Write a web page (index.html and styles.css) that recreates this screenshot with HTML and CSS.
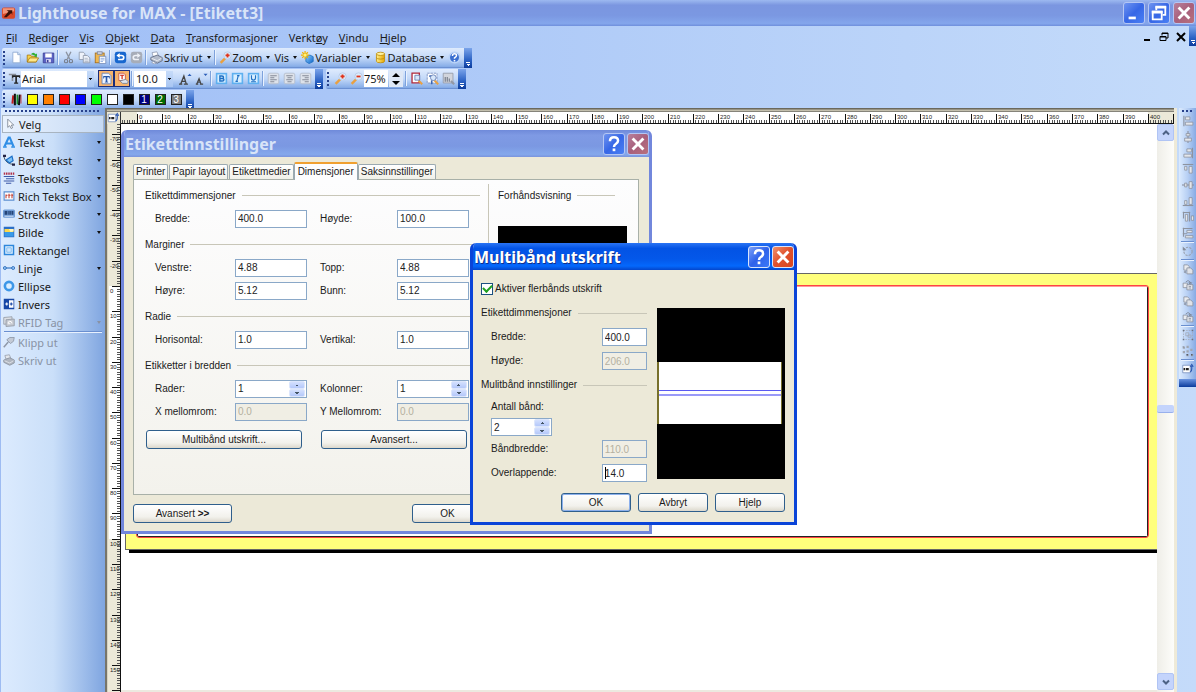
FILE: index.html
```html
<!DOCTYPE html>
<html lang="no">
<head>
<meta charset="utf-8">
<title>Lighthouse for MAX - [Etikett3]</title>
<link rel="stylesheet" href="styles.css">
</head>
<body>
<svg class="defs" aria-hidden="true">
  <defs>
    <linearGradient id="gBlue" x1="0" y1="0" x2="1" y2="1"><stop offset="0" stop-color="#8fd0ff"/><stop offset="1" stop-color="#0a62c8"/></linearGradient>
    <linearGradient id="gGold" x1="0" y1="0" x2="1" y2="0"><stop offset="0" stop-color="#fff08a"/><stop offset="1" stop-color="#e6a400"/></linearGradient>
  </defs>
  <symbol id="i-close" viewBox="0 0 20 20"><path d="M4 4l12 12M16 4L4 16" stroke="#fff" stroke-width="3.200" fill="none"/></symbol>
  <symbol id="i-help" viewBox="0 0 20 20"><path d="M5.500 7q0-4.500 4.500-4.500t4.500 4q0 2-2.500 3.500-2 1.200-2 3.200" stroke="#fff" stroke-width="2.800" fill="none"/><rect x="8.500" y="15" width="3" height="3" fill="#fff"/></symbol>
  <symbol id="i-min" viewBox="0 0 20 20"><rect x="4" y="14" width="8" height="3" fill="#fff"/></symbol>
  <symbol id="i-restore" viewBox="0 0 20 20"><path d="M7 7V3.500h10V12h-3" fill="none" stroke="#fff" stroke-width="2"/><path d="M3 8.500h10V17H3z" fill="none" stroke="#fff" stroke-width="2"/><path d="M2 9h12M6 3.500h12" stroke="#fff" stroke-width="3"/></symbol>
  <symbol id="i-app" viewBox="0 0 16 16"><rect x="1" y="2" width="14" height="12" rx="2" fill="#d8492a"/><path d="M2 3h12v3L2 9z" fill="#f2957a"/><path d="M3 12.500h3L11 8l1 2V5H6l2 1.500z" fill="#3a1008"/></symbol>
  <symbol id="i-new" viewBox="0 0 16 16"><path d="M3.500 1.500h6l3 3v10h-9z" fill="#fff" stroke="#8ba6cf"/><path d="M9.500 1.500v3h3" fill="#cfe0f7" stroke="#8ba6cf"/></symbol>
  <symbol id="i-open" viewBox="0 0 16 16"><path d="M1.500 13.500V5h4l1 1.500h6v7z" fill="#f8d24a" stroke="#a87a10"/><path d="M1.500 13.500l3-5h11l-3 5z" fill="#ffe88a" stroke="#a87a10"/><path d="M6 4q3-4 6 0l1.500-1v4H10l1-1.500" fill="#2fae35"/></symbol>
  <symbol id="i-save" viewBox="0 0 16 16"><path d="M1.500 2.500h13v12h-13z" fill="#5b62c4" stroke="#3b3f94"/><path d="M4 3h8v5H4z" fill="#fff"/><path d="M5 10h6v4H5z" fill="#dcdcf4"/><path d="M6 11h2v3H6z" fill="#3b3f94"/></symbol>
  <symbol id="i-cut" viewBox="0 0 16 16"><path d="M5 1l4.500 9M11 1L6.500 10" stroke="#8c93a0" stroke-width="1.600"/><circle cx="5" cy="12.500" r="2" fill="none" stroke="#777e8c" stroke-width="1.400"/><circle cx="11" cy="12.500" r="2" fill="none" stroke="#777e8c" stroke-width="1.400"/></symbol>
  <symbol id="i-copy" viewBox="0 0 16 16"><path d="M1.500 1.500h5l2 2v7h-7z" fill="#eef2fa" stroke="#8b95a8"/><path d="M6.500 5.500h5l3 3v6h-8z" fill="#eef2fa" stroke="#8b95a8"/><path d="M8 9h4M8 11h5M8 13h5" stroke="#a9b2c2"/></symbol>
  <symbol id="i-paste" viewBox="0 0 16 16"><rect x="1.500" y="2.500" width="11" height="12" fill="#f0b850" stroke="#a36b16"/><rect x="4" y="1" width="6" height="3" fill="#d6dbe6" stroke="#77809a"/><path d="M6.500 6.500h8v9h-8z" fill="#fff" stroke="#6f88b8"/><path d="M8 9h5M8 11h5M8 13h3" stroke="#7d9fd8"/></symbol>
  <symbol id="i-undo" viewBox="0 0 16 16"><rect x="1" y="1" width="14" height="14" rx="3" fill="#1767cf"/><path d="M5 5.500h4q3 0 3 2.500t-3 2.500H5" fill="none" stroke="#fff" stroke-width="2"/><path d="M3 5.500L7 2.500v6z" fill="#fff"/></symbol>
  <symbol id="i-redo" viewBox="0 0 16 16"><rect x="1" y="1" width="14" height="14" rx="3" fill="#a7adb8"/><path d="M11 5.500H7q-3 0-3 2.500t3 2.500h4" fill="none" stroke="#eef1f6" stroke-width="2"/><path d="M13 5.500L9 2.500v6z" fill="#eef1f6"/></symbol>
  <symbol id="i-print" viewBox="0 0 16 16"><path d="M4 7L2.500 2l6-1 2 5z" fill="#fff" stroke="#8f9ab3"/><path d="M1 8l8-3 6 3v4l-6 3-8-4z" fill="#b4bccb" stroke="#5d6880"/><path d="M2 9l7 3 5-3" stroke="#f4f6fa" fill="none"/><path d="M4 13l4 2-3 1-3-2z" fill="#fff" stroke="#8f9ab3"/></symbol>
  <symbol id="i-zin" viewBox="0 0 16 16"><path d="M2 14.500L7.500 9" stroke="#e9a041" stroke-width="3"/><circle cx="10.500" cy="5.500" r="4.500" fill="#dcebfb" stroke="#b5c8e4"/><path d="M10.500 3v5M8 5.500h5" stroke="#e0341c" stroke-width="2.200"/></symbol>
  <symbol id="i-zout" viewBox="0 0 16 16"><path d="M2 14.500L7.500 9" stroke="#e9a041" stroke-width="3"/><circle cx="10.500" cy="5.500" r="4.500" fill="#dcebfb" stroke="#b5c8e4"/><path d="M8 5.500h5" stroke="#e0341c" stroke-width="2.200"/></symbol>
  <symbol id="i-var" viewBox="0 0 16 16"><path d="M6 7l5-2 4 2v6l-5 2.500L6 13z" fill="url(#gBlue)" stroke="#1d6fc0"/><path d="M5 0v10M0 5h10M1.500 1.500l7 7M8.500 1.500l-7 7" stroke="#f3b300" stroke-width="1.500"/><circle cx="5" cy="5" r="2" fill="#fff27a"/></symbol>
  <symbol id="i-db" viewBox="0 0 16 16"><path d="M3 3.500v9q0 2 5 2t5-2v-9z" fill="url(#gGold)" stroke="#bb8a0a"/><ellipse cx="8" cy="3.500" rx="5" ry="2" fill="#fff3a0" stroke="#bb8a0a"/><path d="M3 8q0 2 5 2t5-2" fill="none" stroke="#bb8a0a"/></symbol>
  <symbol id="i-q" viewBox="0 0 16 16"><circle cx="8" cy="8" r="6.500" fill="#3a6fd0" stroke="#b8d2f7" stroke-width="2"/><path d="M5.500 6q0-2.500 2.500-2.500t2.500 2q0 1.500-2.500 3v1" stroke="#fff" stroke-width="1.800" fill="none"/><rect x="7" y="11" width="2" height="2" fill="#fff"/></symbol>
  <symbol id="i-tt" viewBox="0 0 16 16"><path d="M1 2h9v2H6.500v7h-2V4H1z" fill="#8a8f99"/><path d="M5 4h10v3h-1.500V6h-2.500v7h1.500v1.500h-5V13H9V6H6.500v1H5z" fill="#222"/></symbol>
  <symbol id="i-tdoc" viewBox="0 0 16 16"><path d="M2.500 1.500h8l3 3v10h-11z" fill="#eef4ff" stroke="#5c7db5"/><path d="M4 5h8v3h-1V6.500H9V12h1v1H6v-1h1V6.500H5V8H4z" fill="#2456a8"/></symbol>
  <symbol id="i-tprn" viewBox="0 0 16 16"><path d="M3.500 1.500h6l2 2v7h-8z" fill="#fff" stroke="#c04a3c"/><path d="M5 4h5M7.500 4v5" stroke="#d02818" stroke-width="1.500"/><path d="M5 11l7-2 3 3-1 2H8z" fill="#dfe4ee" stroke="#707a90"/></symbol>
  <symbol id="i-abig" viewBox="0 0 16 16"><path d="M0 15h4M6 15h5M2 15L6 5l3 10M3.500 11.500H8" stroke="#444" stroke-width="1.600" fill="none"/><path d="M10.500 5L13 2l2.500 3z" fill="#2a5db8"/></symbol>
  <symbol id="i-asm" viewBox="0 0 16 16"><path d="M1 15h3M6 15h4M2 15l3-7 2.500 7M3.500 12.500H7" stroke="#444" stroke-width="1.400" fill="none"/><path d="M10.500 2L13 5l2.500-3z" fill="#2a5db8"/></symbol>
  <symbol id="i-b" viewBox="0 0 16 16"><rect x="2" y="2" width="12" height="12" fill="#d9efff" stroke="#5fb0f0" stroke-width="2"/><path d="M6 5h2.500q2 0 2 1.500T8.500 8H6zM6 8h3q2 0 2 1.500T9 11H6z" fill="none" stroke="#1e6fc4" stroke-width="1.700"/></symbol>
  <symbol id="i-i" viewBox="0 0 16 16"><rect x="2" y="2" width="12" height="12" fill="#d9efff" stroke="#5fb0f0" stroke-width="2"/><path d="M7.500 4.500h3M5.500 11.500h3M9 4.500l-2 7" stroke="#1e6fc4" stroke-width="1.400"/></symbol>
  <symbol id="i-u" viewBox="0 0 16 16"><rect x="2" y="2" width="12" height="12" fill="#d9efff" stroke="#5fb0f0" stroke-width="2"/><path d="M5.500 4v3.500q0 2.500 2.500 2.500t2.500-2.500V4M5 12h6" stroke="#1e6fc4" stroke-width="1.400" fill="none"/></symbol>
  <symbol id="i-al" viewBox="0 0 16 16"><rect x="1.500" y="1.500" width="13" height="13" rx="2" fill="#dde2ea" stroke="#b3bac8"/><path d="M4 4.500h8M4 7h5M4 9.500h8M4 12h5" stroke="#858b98" stroke-width="1.300"/></symbol>
  <symbol id="i-ac" viewBox="0 0 16 16"><rect x="1.500" y="1.500" width="13" height="13" rx="2" fill="#dde2ea" stroke="#b3bac8"/><path d="M4 4.500h8M5.500 7h5M4 9.500h8M5.500 12h5" stroke="#858b98" stroke-width="1.300"/></symbol>
  <symbol id="i-ar" viewBox="0 0 16 16"><rect x="1.500" y="1.500" width="13" height="13" rx="2" fill="#dde2ea" stroke="#b3bac8"/><path d="M4 4.500h8M7 7h5M4 9.500h8M7 12h5" stroke="#858b98" stroke-width="1.300"/></symbol>
  <symbol id="i-zp1" viewBox="0 0 16 16"><path d="M2.500 1.500h9v12h-9z" fill="#fff" stroke="#b0283a" stroke-width="1.600"/><path d="M10.500 10.500l4.500 4.500" stroke="#e9a041" stroke-width="2.500"/><path d="M6 4h6v6H6z" fill="#d8e8fb" stroke="#5f78b0"/></symbol>
  <symbol id="i-zp2" viewBox="0 0 16 16"><path d="M1.500 1.500h12v12h-12z" fill="#fff" stroke="#7188bb" stroke-dasharray="3 1"/><path d="M7 10v5M4 5h3" stroke="#3a66b4" stroke-width="2"/><path d="M10 10l5 5" stroke="#e9a041" stroke-width="2.500"/><circle cx="9" cy="7" r="3.500" fill="#d8e8fb" stroke="#5f78b0"/></symbol>
  <symbol id="i-zp3" viewBox="0 0 16 16"><path d="M1.500 1.500h12v12h-12z" fill="#d2d5dc" stroke="#9298a5"/><path d="M4 6v6M6.500 6v6M9 8v4" stroke="#7c828f" stroke-width="1.500"/><path d="M11 11l4 4" stroke="#9298a5" stroke-width="2.500"/></symbol>
  <symbol id="i-bars" viewBox="0 0 16 16"><path d="M4 3l-1 10" stroke="#c01c1c" stroke-width="2.500"/><path d="M6 1v14M12 2l-1 13" stroke="#111" stroke-width="2.500"/><path d="M9 2v12" stroke="#1c8c2c" stroke-width="2"/><path d="M13.500 2v11" stroke="#c01c1c"/></symbol>
  <symbol id="i-arrow" viewBox="0 0 16 16"><path d="M5 1.500v11l2.700-2.300L9.500 14l2-1-1.800-3.500H13z" fill="#fff" stroke="#6c7684"/></symbol>
  <symbol id="i-a" viewBox="0 0 16 16"><path d="M2 14L7.500 2h1.500L14 14M4.500 10h7" fill="none" stroke="#2f8ee6" stroke-width="2.800"/><path d="M0 14.500h5M11 14.500h5" stroke="#2f8ee6" stroke-width="2"/></symbol>
  <symbol id="i-bend" viewBox="0 0 16 16"><path d="M1 3q2 10 13 11" fill="none" stroke="#456" stroke-width="1.300"/><path d="M0 1h4v3H0zM12 12.500h4v3h-4z" fill="#224"/><path d="M4 8l8-5 1.500 6-5 3z" fill="#7cc2f6" stroke="#1b6fc8" stroke-width="1.500"/></symbol>
  <symbol id="i-tbox" viewBox="0 0 16 16"><path d="M1 2h14" stroke="#b03048" stroke-width="3" stroke-dasharray="2 1"/><path d="M1 6h14M4 9h11M1 12h14M4 15h7" stroke="#3c58a8" stroke-width="1.600"/></symbol>
  <symbol id="i-rtf" viewBox="0 0 16 16"><path d="M1.500 2.500h13v11h-13z" fill="#fff" stroke="#5c8fd0" stroke-width="1.500"/><path d="M4 6v5M4 7h2M8 5v6M7 7h3M12 5v6M11 7h2.500" stroke="#c03c30" stroke-width="1.400"/></symbol>
  <symbol id="i-code" viewBox="0 0 16 16"><rect x="0" y="2" width="16" height="11" rx="2" fill="#6e9bd6"/><path d="M3 4v5M5 4v5M8 4v5M10.500 4v5M13 4v5" stroke="#143060" stroke-width="1.500"/><path d="M2 11h12" stroke="#e8f0fb"/></symbol>
  <symbol id="i-img" viewBox="0 0 16 16"><path d="M1 1h14v14H1z" fill="#2c6fc6"/><path d="M2 4h12v4H2z" fill="#ffd94a"/><path d="M2 8h12v6H2z" fill="#3a9ae8"/><path d="M8 4h6v3l-4 1z" fill="#fff6c0"/></symbol>
  <symbol id="i-rect" viewBox="0 0 16 16"><path d="M2 2h12v12H2z" fill="#e4f1fe" stroke="#2d87dc" stroke-width="2"/><path d="M5 5h6v6H5z" fill="#cfe4fa" stroke="#67b0f0"/></symbol>
  <symbol id="i-line" viewBox="0 0 16 16"><path d="M3 8h10" stroke="#2a6fc0" stroke-width="1.500"/><circle cx="2.500" cy="8" r="2" fill="#8ec4f8" stroke="#1e5eb0"/><circle cx="13.500" cy="8" r="2" fill="#8ec4f8" stroke="#1e5eb0"/></symbol>
  <symbol id="i-ell" viewBox="0 0 16 16"><circle cx="8" cy="8" r="5.500" fill="#dceeff" stroke="#3d97e8" stroke-width="3.500"/></symbol>
  <symbol id="i-inv" viewBox="0 0 16 16"><path d="M1 1h14v14H1z" fill="#1747a6"/><path d="M8 3h6v10H8z" fill="#fff"/><path d="M3 8h4M5 6v4" stroke="#fff" stroke-width="1.500"/><path d="M9 8h4M11 6v4" stroke="#1747a6" stroke-width="1.500"/></symbol>
  <symbol id="i-rfid" viewBox="0 0 16 16"><path d="M1 2l11-1v9L1 11z" fill="#dcdfe5" stroke="#8e949f"/><path d="M4 5l11-1v9L4 14z" fill="#c4c8d0" stroke="#8e949f"/><path d="M7 11q-1-4 2-4t3 3M9 11V9" fill="none" stroke="#fff" stroke-width="1.300"/></symbol>
  <symbol id="i-clip" viewBox="0 0 16 16"><path d="M1 15l6-7" stroke="#8f98a8" stroke-width="2"/><path d="M5 5l4-3 6 0-1 5-4 3z" fill="#c3cad6" stroke="#858f9f"/></symbol>
  <symbol id="i-gprint" viewBox="0 0 16 16"><path d="M4 7L2.500 2l6-1 2 5z" fill="#e3e7ed" stroke="#949ba8"/><path d="M1 8l8-3 6 3v4l-6 3-8-4z" fill="#b0b6c0" stroke="#868d99"/><path d="M2 9l7 3 5-3" stroke="#e8ebf0" fill="none"/></symbol>
  <symbol id="i-corner" viewBox="0 0 16 16"><path d="M1 3h10v10H1z" fill="#fff" stroke="#6f88b8"/><path d="M2 8h2M5 8h4" stroke="#222" stroke-width="3"/><path d="M13 4v4q0 3-2 4M11 5l2-3 2 3" stroke="#2b57b0" fill="none" stroke-width="1.500"/></symbol>
  <symbol id="r-1" viewBox="0 0 16 16"><path d="M2.500 1v14" stroke="#8d93a0" stroke-width="1.500"/><path d="M4.500 2.500h6v4h-6zM4.500 9.500h10v4h-10z" fill="#e3e6eb" stroke="#888e9b"/></symbol>
  <symbol id="r-2" viewBox="0 0 16 16"><path d="M8 0v16" stroke="#8d93a0" stroke-width="1.500"/><path d="M5.500 3.500h5v3h-5zM3.500 9.500h9v4h-9z" fill="#e3e6eb" stroke="#888e9b"/></symbol>
  <symbol id="r-3" viewBox="0 0 16 16"><path d="M14 1v14" stroke="#8d93a0" stroke-width="1.500"/><path d="M6.500 2.500h6v4h-6zM2.500 9.500h10v4h-10z" fill="#e3e6eb" stroke="#888e9b"/></symbol>
  <symbol id="r-4" viewBox="0 0 16 16"><path d="M1 2h14" stroke="#8d93a0" stroke-width="1.500"/><path d="M3.500 4.500h3v5h-3zM9.500 4.500h4v9h-4z" fill="#e3e6eb" stroke="#888e9b"/></symbol>
  <symbol id="r-5" viewBox="0 0 16 16"><path d="M0 8h16" stroke="#8d93a0" stroke-width="1.500"/><path d="M3.500 5.500h3v5h-3zM9.500 3.500h4v9h-4z" fill="#e3e6eb" stroke="#888e9b"/></symbol>
  <symbol id="r-6" viewBox="0 0 16 16"><path d="M1 14h14" stroke="#8d93a0" stroke-width="1.500"/><path d="M3.500 7.500h3v5h-3zM9.500 3.500h4v9h-4z" fill="#e3e6eb" stroke="#888e9b"/></symbol>
  <symbol id="r-7" viewBox="0 0 16 16"><path d="M1 2h10M2 1v9M10 1v13" stroke="#8d93a0" stroke-width="1.500"/><path d="M4.500 4.500h3v9h-3zM12.500 6.500h3v6h-3z" fill="#e3e6eb" stroke="#888e9b"/></symbol>
  <symbol id="r-8" viewBox="0 0 16 16"><path d="M2 1v12M1 2h13M1 9h6" stroke="#8d93a0" stroke-width="1.500"/><path d="M6.500 4.500h7v3h-7zM4.500 11.500h10v3h-10z" fill="#e3e6eb" stroke="#888e9b"/></symbol>
  <symbol id="r-rot" viewBox="0 0 16 16"><circle cx="8" cy="8.500" r="5.500" fill="none" stroke="#9aa1af" stroke-width="1.500" stroke-dasharray="3 1.500"/><path d="M1 2v5h5z" fill="#858c9a"/></symbol>
  <symbol id="r-lay" viewBox="0 0 16 16"><path d="M2.500 2.500h5l2 2v5h-7z" fill="#e9ebef" stroke="#858c9a"/><path d="M6.500 6.500h5l3 3v5h-8z" fill="#dfe2e8" stroke="#858c9a"/><path d="M2 12l3-2v4z" fill="#858c9a"/></symbol>
  <symbol id="r-lay2" viewBox="0 0 16 16"><path d="M1.500 5.500h6v6h-6z" fill="#e9ebef" stroke="#858c9a"/><path d="M6.500 7.500h8v7h-8z" fill="#dfe2e8" stroke="#858c9a"/><path d="M5 4q3-4 6 0v2M9 5h4l-2 2z" stroke="#777f8e" fill="none"/><path d="M9 10h3M9 12h3" stroke="#858c9a"/></symbol>
  <symbol id="r-grp" viewBox="0 0 16 16"><path d="M2 2h12v12H2z" fill="none" stroke="#a3a9b6" stroke-dasharray="2 1.500"/><path d="M5 5h4v4H5zM8 8h4v3H8z" fill="none" stroke="#a3a9b6"/><path d="M1 1h2v2H1zM13 1h2v2h-2zM1 13h2v2H1zM13 13h2v2h-2z" fill="#6d7482"/></symbol>
  <symbol id="r-ung" viewBox="0 0 16 16"><path d="M1 2h3v3H1zM6 1h3v3H6zM1 8h3v3H1zM6 12h3v3H6zM11 5h3v3h-3zM12 12h3v3h-3zM6 7h3v3H6z" fill="#a0a6b2"/><path d="M1 2h1v1H1zM6 12h2v2H6zM12 12h2v2h-2z" fill="#555c6a"/></symbol>
</svg>

<header class="titlebar">
  <svg class="app-icon"><use href="#i-app"/></svg>
  <h1 class="title">Lighthouse for MAX - [Etikett3]</h1>
  <button class="cap-btn" aria-label="Minimer"><svg><use href="#i-min"/></svg></button>
  <button class="cap-btn" aria-label="Gjenopprett"><svg><use href="#i-restore"/></svg></button>
  <button class="cap-btn red" aria-label="Lukk"><svg><use href="#i-close"/></svg></button>
</header>

<nav class="menubar">
  <button><u>F</u>il</button><button><u>R</u>ediger</button><button><u>V</u>is</button><button><u>O</u>bjekt</button><button><u>D</u>ata</button><button><u>T</u>ransformasjoner</button><button>Verkt<u>ø</u>y</button><button><u>V</u>indu</button><button><u>H</u>jelp</button>
  <div class="mdi">
    <button aria-label="Minimer dokument"><svg viewBox="0 0 10 10"><path d="M2 8h6" stroke="#000" stroke-width="2"/></svg></button>
    <button aria-label="Gjenopprett dokument"><svg viewBox="0 0 10 10"><path d="M3 3.500V1h6v5H7" fill="none" stroke="#000"/><path d="M1 4.500h6v4H1z" fill="none" stroke="#000"/><path d="M3 1.500h6M1 5h6" stroke="#000"/></svg></button>
    <button aria-label="Lukk dokument"><svg viewBox="0 0 10 10"><path d="M1 1l8 8M9 1L1 9" stroke="#000" stroke-width="2"/></svg></button>
  </div>
  <span class="cap"></span>
</nav>

<div class="bars">
  <div class="bar-row">
    <div class="toolbar">
      <span class="grip"></span>
      <button class="tb" aria-label="Ny"><svg><use href="#i-new"/></svg></button>
      <button class="tb" aria-label="Åpne"><svg><use href="#i-open"/></svg></button>
      <button class="tb" aria-label="Lagre"><svg><use href="#i-save"/></svg></button>
      <span class="sep"></span>
      <button class="tb" aria-label="Klipp"><svg><use href="#i-cut"/></svg></button>
      <button class="tb" aria-label="Kopier"><svg><use href="#i-copy"/></svg></button>
      <button class="tb" aria-label="Lim inn"><svg><use href="#i-paste"/></svg></button>
      <span class="sep"></span>
      <button class="tb" aria-label="Angre"><svg><use href="#i-undo"/></svg></button>
      <button class="tb" aria-label="Gjenta"><svg><use href="#i-redo"/></svg></button>
      <span class="sep"></span>
      <button class="tb text"><svg><use href="#i-print"/></svg>Skriv ut<i class="dd"></i></button>
      <span class="sep"></span>
      <button class="tb text"><svg><use href="#i-zin"/></svg>Zoom<i class="dd"></i></button>
      <button class="tb text">Vis<i class="dd"></i></button>
      <button class="tb text"><svg><use href="#i-var"/></svg>Variabler<i class="dd"></i></button>
      <button class="tb text"><svg><use href="#i-db"/></svg>Database<i class="dd"></i></button>
      <button class="tb" aria-label="Hjelp"><svg><use href="#i-q"/></svg></button>
      <span class="cap"></span>
    </div>
  </div>
  <div class="bar-row">
    <div class="toolbar">
      <span class="grip"></span>
      <div class="combo"><svg><use href="#i-tt"/></svg><select class="font-name" aria-label="Skrift"><option>Arial</option></select></div>
      <button class="tb on" aria-label="Skjermskrift"><svg><use href="#i-tdoc"/></svg></button>
      <button class="tb on" aria-label="Skriverskrift"><svg><use href="#i-tprn"/></svg></button>
      <span class="sep"></span>
      <div class="combo"><select class="font-size" aria-label="Størrelse"><option>10.0</option></select></div>
      <button class="tb" aria-label="Større"><svg><use href="#i-abig"/></svg></button>
      <button class="tb" aria-label="Mindre"><svg><use href="#i-asm"/></svg></button>
      <span class="sep"></span>
      <button class="tb" aria-label="Fet"><svg><use href="#i-b"/></svg></button>
      <button class="tb" aria-label="Kursiv"><svg><use href="#i-i"/></svg></button>
      <button class="tb" aria-label="Understrek"><svg><use href="#i-u"/></svg></button>
      <span class="sep"></span>
      <button class="tb" aria-label="Venstrejuster"><svg><use href="#i-al"/></svg></button>
      <button class="tb" aria-label="Midtstill"><svg><use href="#i-ac"/></svg></button>
      <button class="tb" aria-label="Høyrejuster"><svg><use href="#i-ar"/></svg></button>
      <span class="cap"></span>
    </div>
    <div class="toolbar">
      <span class="grip"></span>
      <button class="tb" aria-label="Zoom inn"><svg><use href="#i-zin"/></svg></button>
      <button class="tb" aria-label="Zoom ut"><svg><use href="#i-zout"/></svg></button>
      <input class="zoom-val" aria-label="Zoom" value="75%">
      <span class="updown"><button aria-label="Opp"></button><button class="down" aria-label="Ned"></button></span>
      <span class="sep"></span>
      <button class="tb" aria-label="Zoom side"><svg><use href="#i-zp1"/></svg></button>
      <button class="tb" aria-label="Zoom bredde"><svg><use href="#i-zp2"/></svg></button>
      <button class="tb" aria-label="Zoom objekt"><svg><use href="#i-zp3"/></svg></button>
      <span class="cap"></span>
    </div>
  </div>
  <div class="bar-row">
    <div class="toolbar">
      <span class="grip"></span>
      <button class="tb" aria-label="Farger"><svg><use href="#i-bars"/></svg></button>
      <button class="tb" aria-label="Gul"><span class="sw yellow"></span></button>
      <button class="tb" aria-label="Oransje"><span class="sw orange"></span></button>
      <button class="tb" aria-label="Rød"><span class="sw redc"></span></button>
      <button class="tb" aria-label="Blå"><span class="sw blue"></span></button>
      <button class="tb" aria-label="Grønn"><span class="sw green"></span></button>
      <button class="tb" aria-label="Hvit"><span class="sw white"></span></button>
      <button class="tb" aria-label="Svart"><span class="sw black"></span></button>
      <button class="tb"><span class="sw navy">1</span></button>
      <button class="tb"><span class="sw dgreen">2</span></button>
      <button class="tb"><span class="sw gray">3</span></button>
      <span class="cap"></span>
    </div>
  </div>
</div>

<main class="main">
  <aside class="toolbox">
    <span class="hgrip"></span>
    <button class="tool active"><svg><use href="#i-arrow"/></svg>Velg</button>
    <button class="tool"><svg><use href="#i-a"/></svg>Tekst<i class="dd"></i></button>
    <button class="tool"><svg><use href="#i-bend"/></svg>Bøyd tekst<i class="dd"></i></button>
    <button class="tool"><svg><use href="#i-tbox"/></svg>Tekstboks<i class="dd"></i></button>
    <button class="tool"><svg><use href="#i-rtf"/></svg>Rich Tekst Box<i class="dd"></i></button>
    <button class="tool"><svg><use href="#i-code"/></svg>Strekkode<i class="dd"></i></button>
    <button class="tool"><svg><use href="#i-img"/></svg>Bilde<i class="dd"></i></button>
    <button class="tool"><svg><use href="#i-rect"/></svg>Rektangel</button>
    <button class="tool"><svg><use href="#i-line"/></svg>Linje<i class="dd"></i></button>
    <button class="tool"><svg><use href="#i-ell"/></svg>Ellipse</button>
    <button class="tool"><svg><use href="#i-inv"/></svg>Invers</button>
    <button class="tool" disabled><svg><use href="#i-rfid"/></svg>RFID Tag<i class="dd"></i></button>
    <span class="hsep"></span>
    <button class="tool" disabled><svg><use href="#i-clip"/></svg>Klipp ut</button>
    <button class="tool" disabled><svg><use href="#i-gprint"/></svg>Skriv ut</button>
  </aside>

  <section class="work">
    <div class="corner"><svg><use href="#i-corner"/></svg></div>
    <svg class="hruler" id="hruler"></svg>
    <svg class="vruler" id="vruler"></svg>
    <div class="stage">
      <div class="label-sheet"><div class="label-area"></div></div>

      <div class="dialog settings" role="dialog" aria-label="Etikettinnstillinger">
        <div class="dlg-title"><h2>Etikettinnstillinger</h2>
          <button class="cap-btn" aria-label="Hjelp"><svg><use href="#i-help"/></svg></button>
          <button class="cap-btn red" aria-label="Lukk"><svg><use href="#i-close"/></svg></button>
        </div>
        <div class="dlg-body">
          <div class="tabs" role="tablist">
            <button role="tab">Printer</button><button role="tab">Papir layout</button><button role="tab">Etikettmedier</button><button role="tab" class="sel">Dimensjoner</button><button role="tab">Saksinnstillinger</button>
          </div>
          <div class="panel">
            <div class="form">
              <h3>Etikettdimmensjoner</h3>
              <div class="fields">
                <label for="w">Bredde:</label><input id="w" value="400.0"><label for="h">Høyde:</label><input id="h" value="100.0">
              </div>
              <h3>Marginer</h3>
              <div class="fields">
                <label for="ml">Venstre:</label><input id="ml" value="4.88"><label for="mt">Topp:</label><input id="mt" value="4.88">
                <label for="mr">Høyre:</label><input id="mr" value="5.12"><label for="mb">Bunn:</label><input id="mb" value="5.12">
              </div>
              <h3>Radie</h3>
              <div class="fields">
                <label for="rh">Horisontal:</label><input id="rh" value="1.0"><label for="rv">Vertikal:</label><input id="rv" value="1.0">
              </div>
              <h3>Etikketter i bredden</h3>
              <div class="fields">
                <label for="rows">Rader:</label><span class="spin"><input id="rows" value="1"><span class="spin-btns"><button aria-label="Opp"></button><button class="down" aria-label="Ned"></button></span></span><label for="cols">Kolonner:</label><span class="spin"><input id="cols" value="1"><span class="spin-btns"><button aria-label="Opp"></button><button class="down" aria-label="Ned"></button></span></span>
                <label for="xg">X mellomrom:</label><input id="xg" value="0.0" disabled><label for="yg">Y Mellomrom:</label><input id="yg" value="0.0" disabled>
              </div>
              <div class="form-btns"><button class="btn">Multibånd utskrift...</button><button class="btn">Avansert...</button></div>
            </div>
            <div class="preview-col">
              <h3>Forhåndsvisning</h3>
              <div class="preview-box"></div>
            </div>
          </div>
          <div class="dlg-foot"><button class="btn">Avansert <b>&gt;&gt;</b></button><button class="btn ok">OK</button></div>
        </div>
      </div>

      <div class="dialog multi" role="dialog" aria-label="Multibånd utskrift">
        <div class="dlg-title"><h2>Multibånd utskrift</h2>
          <button class="cap-btn" aria-label="Hjelp"><svg><use href="#i-help"/></svg></button>
          <button class="cap-btn red" aria-label="Lukk"><svg><use href="#i-close"/></svg></button>
        </div>
        <div class="dlg-body">
          <div class="multi-main">
            <div class="multi-form">
              <label class="check"><input type="checkbox" checked>Aktiver flerbånds utskrift</label>
              <h3>Etikettdimmensjoner</h3>
              <div class="pair"><label for="bw">Bredde:</label><input id="bw" value="400.0"></div>
              <div class="pair"><label for="bh">Høyde:</label><input id="bh" value="206.0" disabled></div>
              <h3>Mulitbånd innstillinger</h3>
              <div class="bands"><label for="bn">Antall bånd:</label><span class="spin"><input id="bn" value="2"><span class="spin-btns"><button aria-label="Opp"></button><button class="down" aria-label="Ned"></button></span></span></div>
              <div class="pair"><label for="bb">Båndbredde:</label><input id="bb" value="110.0" disabled></div>
              <div class="pair"><label for="ov">Overlappende:</label><input id="ov" class="caret" value="14.0"></div>
            </div>
            <div class="band-preview"><div class="band-sheet"></div></div>
          </div>
          <div class="dlg-foot"><button class="btn default">OK</button><button class="btn">Avbryt</button><button class="btn">Hjelp</button></div>
        </div>
      </div>
      <div class="hscroll"></div>
    </div>
    <div class="vscroll">
      <button class="sb" aria-label="Rull opp"><svg viewBox="0 0 10 10"><path d="M2 6.500l3-3 3 3" fill="none" stroke="#4d6185" stroke-width="2"/></svg></button>
      <span class="track"><span class="thumb"></span></span>
      <button class="sb" aria-label="Rull ned"><svg viewBox="0 0 10 10"><path d="M2 3.500l3 3 3-3" fill="none" stroke="#4d6185" stroke-width="2"/></svg></button>
    </div>
  </section>

  <aside class="side">
    <div class="side-bar">
      <span class="hgrip"></span>
      <button aria-label="Juster venstre"><svg><use href="#r-1"/></svg></button>
      <button aria-label="Juster senter"><svg><use href="#r-2"/></svg></button>
      <button aria-label="Juster høyre"><svg><use href="#r-3"/></svg></button>
      <button aria-label="Juster topp"><svg><use href="#r-4"/></svg></button>
      <button aria-label="Juster midten"><svg><use href="#r-5"/></svg></button>
      <button aria-label="Juster bunn"><svg><use href="#r-6"/></svg></button>
      <button aria-label="Fordel vannrett"><svg><use href="#r-7"/></svg></button>
      <button aria-label="Fordel loddrett"><svg><use href="#r-8"/></svg></button>
      <span class="hsep"></span>
      <button aria-label="Roter"><svg><use href="#r-rot"/></svg></button>
      <span class="hsep"></span>
      <button aria-label="Send bakover"><svg><use href="#r-lay"/></svg></button>
      <button aria-label="Bring fremover"><svg><use href="#r-lay2"/></svg></button>
      <button aria-label="Send bakerst"><svg><use href="#r-lay"/></svg></button>
      <button aria-label="Bring fremst"><svg><use href="#r-lay2"/></svg></button>
      <span class="hsep"></span>
      <button aria-label="Grupper"><svg><use href="#r-grp"/></svg></button>
      <button aria-label="Løs opp"><svg><use href="#r-ung"/></svg></button>
      <span class="hsep"></span>
      <button aria-label="Egenskaper"><svg><use href="#i-corner"/></svg></button>
      <span class="end"></span>
    </div>
  </aside>
</main>
<script src="rulers.js"></script>
</body>
</html>
```

FILE: styles.css
```css
* { box-sizing: border-box; }
body {
  margin: 0;
  height: 100vh;
  display: flex;
  flex-direction: column;
  overflow: hidden;
  font-family: "Noto Sans", sans-serif;
  font-size: 11px;
  color: #1a1a1a;
  background: linear-gradient(to right, #9fbef6, #c4dbfa);
}
button, input, select { font: inherit; color: inherit; margin: 0; padding: 0; border: 0; background: none; }
h1, h2, h3 { margin: 0; font-weight: normal; }
svg { display: block; flex: none; }
.defs { position: absolute; width: 0; height: 0; }

/* caption */
.titlebar {
  flex: none;
  height: 26px;
  display: flex;
  align-items: center;
  gap: 2px;
  padding: 0 1px;
  background: linear-gradient(#9db9f0, #7b96e0 20%, #7b98e2 60%, #84a6ec 90%, #6f8fdc);
}
.app-icon { width: 15px; height: 16px; }
.title { flex: 1; font: 700 16px/24px "Noto Sans", sans-serif; color: #d8e4f8; }
.cap-btn {
  width: 22px; height: 22px;
  display: grid;
  place-items: center;
  border: 1px solid #b4c6f4;
  border-radius: 3px;
  background: linear-gradient(135deg, #6f94f0, #3767e6 50%, #4a80f4);
}
.cap-btn svg { width: 18px; height: 18px; }
.cap-btn.red { background: linear-gradient(135deg, #b8809c, #a8607c 50%, #b8707c); }
.titlebar .cap-btn { margin-left: 1px; }

/* menu */
.menubar { flex: none; height: 22px; display: flex; align-items: center; gap: 11px; padding-left: 6px; }
.menubar button { white-space: nowrap; }
.mdi { margin-left: auto; display: flex; gap: 7px; }
.mdi button { width: 10px; height: 10px; }
.mdi svg { width: 10px; height: 10px; }
.menubar .cap { width: 7px; margin-left: -8px; }

/* toolbars */
.bars { flex: none; height: 60px; display: flex; flex-direction: column; gap: 1px; }
.bar-row { display: flex; gap: 3px; padding-left: 2px; }
.toolbar {
  height: 20px;
  display: flex;
  align-items: center;
  padding: 0 0 1px 1px;
  border-radius: 2px 0 0 2px;
  background: linear-gradient(#dfebfd, #c2d8f8 50%, #88aee8 92%, #5e83c8);
}
.grip { width: 3px; height: 14px; margin-right: 2px; background: radial-gradient(circle at 1px 1px, #27418c 1px, transparent 1px) 0 0 / 3px 4px; }
.tb { height: 17px; width: 16px; display: flex; align-items: center; justify-content: center; white-space: nowrap; }
.tb svg { width: 13px; height: 13px; }
.tb.text { width: auto; padding: 0 2px; gap: 1px; }
.tb.on { border: 1px solid #1b2d7a; background: #f7b36c; }
.dd { flex: none; border: 2px solid transparent; border-top: 3px solid #111; border-bottom: 0; margin-left: 3px; }
.sep { width: 1px; height: 15px; margin: 0 2px 0 1px; background: #7ea2dc; box-shadow: 1px 0 #eaf2fe; }
.cap {
  flex: none;
  align-self: flex-start;
  width: 8px; height: 20px; margin: 0 0 -1px 2px;
  background:
    linear-gradient(#fff, #fff) 2px 14px / 4px 1px no-repeat,
    conic-gradient(from 315deg at 50% 100%, #fff 90deg, transparent 0) 2px 16px / 4px 2px no-repeat,
    linear-gradient(#7ba4ea, #2b62c4 60%, #0c3c9c);
}
.combo { height: 16px; display: flex; align-items: center; margin-right: 4px; }
.combo svg { width: 13px; height: 13px; }
select {
  appearance: none;
  height: 16px;
  background:
    conic-gradient(from 315deg at 50% 100%, #111 90deg, transparent 0) right 1px center / 5px 2px no-repeat,
    linear-gradient(#c6dbf9, #a9c6f2) right / 7px 100% no-repeat, #fff;
}
.font-name { width: 73px; padding-left: 1px; }
.font-size { width: 39px; padding-left: 2px; }
.zoom-val { width: 24px; height: 17px; background: #fff; }
.updown { display: grid; grid-template-rows: 8px 8px; width: 14px; margin: 0 1px; background: #dfe8f6; justify-items: center; align-items: center; }
.updown button { border: 4px solid transparent; border-bottom: 4px solid #000; border-top: 0; }
.updown .down { border-top: 4px solid #000; border-bottom: 0; }
.sw { width: 11px; height: 11px; border: 1px solid #222; font: 10px/9px "Liberation Sans", sans-serif; color: #fff; }
.yellow { background: #ff0; }
.orange { background: #ff8000; }
.redc { background: #f00; }
.blue { background: #00f; }
.green { background: #0f0; }
.white { background: #fff; }
.black { background: #000; }
.navy { background: #000080; }
.dgreen { background: #006c00; }
.gray { background: #808080; }

/* main */
.main { flex: 1; min-height: 0; display: flex; }
.toolbox {
  flex: none;
  width: 105px;
  display: flex;
  flex-direction: column;
  padding: 2px 1px 0 1px;
  border-left: 1px solid #9ebcf2;
  background: linear-gradient(to right, #dcebfe, #cadff9 50%, #7fa5e0);
}
.hgrip { flex: none; height: 3px; margin: 0 3px 2px; background: linear-gradient(to right, #27418c 50%, transparent 0) 0 0 / 4px 2px repeat-x; }
.tool { flex: none; height: 18px; display: flex; align-items: center; gap: 3px; padding: 0 3px 0 1px; text-align: left; white-space: nowrap; }
.tool svg { width: 12px; height: 12px; }
.tool .dd { margin-left: auto; }
.tool.active { border: 1px solid #a8b4c0; background: linear-gradient(to right, #e9f2fe, #c6daf4); }
.tool:disabled { color: #8892a4; }
.tool:disabled .dd { border-top-color: #8892a4; }
.hsep { flex: none; height: 1px; margin: 0 2px 1px; background: #6a8fd0; box-shadow: 0 1px #e8f1fe; }

.work {
  flex: 1;
  min-width: 0;
  display: grid;
  grid-template-columns: 14px minmax(0, 1fr) 17px;
  grid-template-rows: 12px minmax(0, 1fr);
  padding-top: 4px;
  border-left: 2px solid #77756a;
  background: linear-gradient(#55534a, #d8d4c0 3px, #333 4px) top / 100% 4px no-repeat, #ece9d8;
}
.corner { background: #ece9d8; border-right: 1px solid #333; }
.corner svg { width: 13px; height: 12px; }
.hruler { grid-column: 2 / 4; width: 100%; height: 12px; background: #ece9d8; }
.vruler { width: 14px; height: 100%; background: #ece9d8; border-left: 1px solid #d6d2c0; }
.stage { position: relative; overflow: hidden; background: #fff; }
.hruler text, .vruler text { font: 6px "Liberation Sans", sans-serif; fill: #222; }
.label-sheet {
  position: absolute;
  left: 4px; right: 0; top: 149px; height: 277px;
  display: flex;
  padding: 12px 9px 12px 11px;
  border: 1px solid #666;
  border-right: 0;
  background: #ffff7c;
  box-shadow: 4px 3px #000;
}
.label-area { flex: 1; border: 1px solid #222; border-top-color: #f99; border-radius: 2px; outline: 1px solid #f44; background: #fff; }
.hscroll { position: absolute; left: 0; right: 0; bottom: 0; height: 2px; background: #ece9e0; }

.vscroll { display: flex; flex-direction: column; background: linear-gradient(to right, #efeee8, #fdfdfa); }
.sb { height: 17px; display: grid; place-items: center; border: 1px solid #b0c4f4; border-radius: 2px; background: #c4d4fc; }
.vscroll .sb:last-child { margin-bottom: 2px; }
.sb svg { width: 10px; height: 10px; }
.track { flex: 1; display: flex; flex-direction: column; padding-top: 264px; }
.thumb { height: 8px; border-radius: 2px; background: #c4d4fc; border-bottom: 1px solid #98b0ec; }

.side { flex: none; width: 22px; padding-left: 2px; border-left: 3px solid #eeead8; }
.side-bar { display: flex; flex-direction: column; align-items: center; padding-top: 2px; background: linear-gradient(to right, #dcebfe, #b8d0f4 50%, #86aae4); }
.side-bar button { width: 14px; height: 16px; display: grid; place-items: center; }
.side-bar svg { width: 12px; height: 12px; }
.side-bar .hgrip, .side-bar .hsep { align-self: stretch; }
.side-bar .hgrip { margin-bottom: 0; }
.end { align-self: stretch; height: 8px; margin-top: 2px; background: linear-gradient(#6a94e0, #0c3c9c); }

/* dialogs */
.dialog { position: absolute; font: 10px/12px "Liberation Sans", sans-serif; border-radius: 6px 6px 0 0; overflow: hidden; border: 3px solid; border-top: 0; }
.dlg-title { height: 27px; display: flex; align-items: center; gap: 2px; }
.dlg-title h2 { flex: 1; font: 700 16px/24px "Noto Sans", sans-serif; padding-left: 1px; }
.dlg-body { background: #ece9d8; }
.settings { left: 0; top: 6px; width: 531px; border-color: #7287dc; }
.settings .dlg-title { background: linear-gradient(#6f8ada, #7f9ae4 20%, #7b98e2 60%, #84a8ec 90%, #7a94dc); }
.settings h2 { color: #d8e4f8; }
.settings .dlg-body { padding: 6px 10px 8px 9px; }
.multi { left: 349px; top: 119px; width: 327px; border-color: #0a44d8; }
.multi .dlg-title { background: linear-gradient(#2a74f4, #0353e4 20%, #0458ea 60%, #0468fc 85%, #0446cc); }
.multi h2 { color: #fff; text-shadow: 1px 1px #10308c; }
.multi .cap-btn { border-color: #d8e4fc; background: linear-gradient(135deg, #7ca0f8, #2f62ea 50%, #3a78f8); }
.multi .cap-btn.red { background: linear-gradient(135deg, #f0906c, #e0502c 50%, #d84820); }
.multi .dlg-body { padding: 7px 9px 10px 8px; }

.tabs { display: flex; align-items: flex-end; height: 16px; gap: 1px; }
.tabs button { height: 15px; padding: 0 2px; border: 1px solid #9ba9b0; border-bottom: 0; border-radius: 2px 2px 0 0; background: linear-gradient(#fff, #f0f0e8); white-space: nowrap; }
.tabs .sel { height: 18px; margin: 0 -1px -1px; padding: 0 3px; border-top: 2px solid #f0a030; background: #fdfdfe; position: relative; }
.panel { display: flex; height: 316px; padding-top: 4px; border: 1px solid #a8b0a8; background: linear-gradient(#fdfdfe, #f3f2ec); }
.form { width: 354px; padding: 0 8px 0 11px; }
h3 { display: flex; align-items: center; height: 23px; gap: 6px; font: inherit; white-space: nowrap; }
h3::after { content: ""; flex: 1; height: 1px; background: #c8c6b8; }
.fields { display: grid; grid-template-columns: 80px 85px 77px 72px; grid-auto-rows: 23px; align-items: center; padding-left: 10px; margin-bottom: 3px; }
.fields > input, .fields > .spin { width: 72px; }
.dialog input:not([type]), .spin { height: 18px; padding-left: 2px; border: 1px solid #8aa8c8; background: #fff; color: #222; min-width: 0; }
.dialog input:disabled { background: #f0eee4; color: #b4b0a0; }
.dialog .spin { display: flex; padding: 0 1px 0 0; }
.dialog .spin input:not([type]) { flex: 1; width: 0; height: 16px; border: 0; }
.spin-btns { display: grid; grid-template-rows: 8px 8px; width: 16px; }
.spin-btns button { border-radius: 2px; border: 1px solid #dce6fc; background: conic-gradient(from 135deg at 50% 0, #456 90deg, transparent 0) center / 4px 2px no-repeat, linear-gradient(#d4e0fe, #b4c8fa); }
.spin-btns .down { background: conic-gradient(from 315deg at 50% 100%, #456 90deg, transparent 0) center / 4px 2px no-repeat, linear-gradient(#d4e0fe, #b4c8fa); }
.btn { height: 19px; border: 1px solid #2f5f8c; border-radius: 3px; background: linear-gradient(#fff, #f2f1ec 70%, #dcd8cc); white-space: nowrap; }
.form-btns { display: grid; grid-template-columns: 156px 146px; gap: 19px; padding: 4px 0 0 1px; }
.preview-col { width: 139px; height: 200px; padding-left: 9px; border-left: 1px solid #c8c6b8; }
.preview-col h3 { padding-right: 12px; }
.preview-box { width: 129px; height: 130px; margin-top: 19px; background: #000; }
.settings .dlg-foot { display: flex; justify-content: space-between; margin-top: 9px; padding-right: 156px; }
.settings .dlg-foot .btn { width: 99px; }
.settings .dlg-foot .ok { width: 71px; }

.multi-main { display: flex; gap: 10px; align-items: flex-end; justify-content: space-between; }
.multi-form { width: 167px; }
.multi-form h3 { height: 24px; }
.check { height: 24px; display: flex; align-items: center; gap: 2px; white-space: nowrap; }
.check input { appearance: none; width: 12px; height: 12px; border: 1px solid #1c5180; background: #fff; display: grid; place-items: center; }
.check input::after { content: ""; width: 7px; height: 4px; border: solid #21a121; border-width: 0 0 2px 2px; transform: rotate(-45deg) translate(1px, -1px); }
.pair { height: 24px; display: flex; align-items: center; justify-content: space-between; padding-left: 10px; }
.pair input { width: 45px; }
.bands { display: grid; grid-template-rows: 20px 20px; align-items: center; padding-left: 10px; }
.bands .spin { width: 61px; }
.dialog .pair input.caret { background: linear-gradient(#000, #000) 2px 2px / 1px 12px no-repeat, #fff; }
.band-preview { width: 129px; height: 171px; margin-bottom: 6px; padding: 54px 3px 54px 0; background: #000; }
.band-sheet {
  height: 62px;
  border: 1px solid #77702c; border-width: 0 1px 0 2px;
  background:
    linear-gradient(#5a5af0, #5a5af0) 0 28px / 100% 1px no-repeat,
    linear-gradient(#9a9af8, #9a9af8) 0 32px / 100% 2px no-repeat, #fff;
}
.multi .dlg-foot { display: flex; justify-content: flex-end; gap: 7px; margin-top: 8px; }
.multi .dlg-foot .btn { width: 70px; }
.default { box-shadow: inset 0 0 0 1px #8cb0ec; }
```

FILE: rulers.js
```js
const NS = "http://www.w3.org/2000/svg";
const STEP = 25.27;

function add(svg, name, attrs, text) {
  const el = document.createElementNS(NS, name);
  for (const key in attrs) el.setAttribute(key, attrs[key]);
  if (text !== undefined) el.textContent = text;
  svg.appendChild(el);
}

function drawHorizontal(svg) {
  const width = svg.clientWidth;
  const zero = 16;
  svg.replaceChildren();
  add(svg, "rect", { x: zero, y: 0, width: Math.round(STEP * 40), height: 11, fill: "#fff" });
  for (let i = -6; zero + i * STEP / 10 < width; i++) {
    const x = Math.round(zero + i * STEP / 10);
    const major = i % 10 === 0;
    add(svg, "rect", { x: x, y: major ? 2 : 8, width: 1, height: major ? 9 : 3, fill: major ? "#111" : "#555" });
    if (major && i >= 0 && i <= 400) add(svg, "text", { x: x + 2, y: 7 }, i);
  }
  add(svg, "rect", { x: 0, y: 11, width: width, height: 1, fill: "#111" });
}

function drawVertical(svg) {
  const height = svg.clientHeight;
  const zero = 162;
  svg.replaceChildren();
  add(svg, "rect", { x: 1, y: zero, width: 12, height: Math.round(STEP * 10), fill: "#fff" });
  for (let i = -64; zero + i * STEP / 10 < height; i++) {
    const y = Math.round(zero + i * STEP / 10);
    const major = i % 10 === 0;
    add(svg, "rect", { x: major ? 4 : 9, y: y, width: major ? 9 : 4, height: 1, fill: major ? "#111" : "#555" });
    if (major && y + 8 < height) add(svg, "text", { x: 2, y: y + 7 }, i < 0 ? i - 10 : i);
  }
  add(svg, "rect", { x: 12, y: 0, width: 1, height: height, fill: "#111" });
}

function draw() {
  drawHorizontal(document.getElementById("hruler"));
  drawVertical(document.getElementById("vruler"));
}

draw();
window.addEventListener("resize", draw);
```
